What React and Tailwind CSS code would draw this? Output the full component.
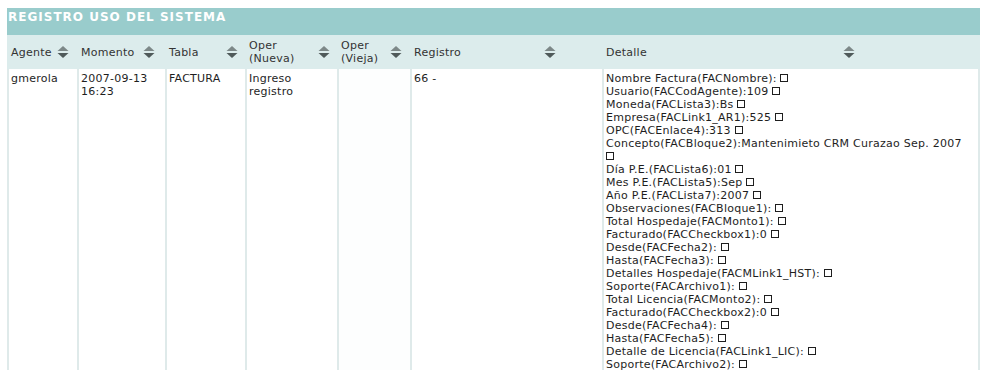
import React from 'react';

const font = { fontFamily: '"DejaVu Sans", Verdana, sans-serif' };

const columns = [
  { key: 'agente', label: ['Agente'], width: 'w-[68px]', textW: 'w-[46px]' },
  { key: 'momento', label: ['Momento'], width: 'w-[86px]', textW: 'w-[62px]' },
  { key: 'tabla', label: ['Tabla'], width: 'w-[78px]', textW: 'w-[57px]' },
  { key: 'nueva', label: ['Oper', '(Nueva)'], width: 'w-[90px]', textW: 'w-[69px]' },
  { key: 'vieja', label: ['Oper', '(Vieja)'], width: 'w-[71px]', textW: 'w-[49px]' },
  { key: 'registro', label: ['Registro'], width: 'w-[190px]', textW: 'w-[130px]' },
  { key: 'detalle', label: ['Detalle'], width: 'w-[374px]', textW: 'w-[237px]' },
];

const detalle = [
  ['Nombre Factura(FACNombre): ', true],
  ['Usuario(FACCodAgente):109 ', true],
  ['Moneda(FACLista3):Bs ', true],
  ['Empresa(FACLink1_AR1):525 ', true],
  ['OPC(FACEnlace4):313 ', true],
  ['Concepto(FACBloque2):Mantenimieto CRM Curazao Sep. 2007', false],
  ['', true],
  ['Día P.E.(FACLista6):01 ', true],
  ['Mes P.E.(FACLista5):Sep ', true],
  ['Año P.E.(FACLista7):2007 ', true],
  ['Observaciones(FACBloque1): ', true],
  ['Total Hospedaje(FACMonto1): ', true],
  ['Facturado(FACCheckbox1):0 ', true],
  ['Desde(FACFecha2): ', true],
  ['Hasta(FACFecha3): ', true],
  ['Detalles Hospedaje(FACMLink1_HST): ', true],
  ['Soporte(FACArchivo1): ', true],
  ['Total Licencia(FACMonto2): ', true],
  ['Facturado(FACCheckbox2):0 ', true],
  ['Desde(FACFecha4): ', true],
  ['Hasta(FACFecha5): ', true],
  ['Detalle de Licencia(FACLink1_LIC): ', true],
  ['Soporte(FACArchivo2): ', true],
];

const Box = () => <span className="inline-block h-[8px] w-[8px] border border-[#1e1e1e] align-baseline" />;

// little up/down sort arrows used in the header
const SortIcon = () => (
  <svg width="12" height="12" viewBox="0 0 12 12" className="shrink-0">
    <path d="M6 0 L11.5 5 L0.5 5 Z" fill="#7d8888" />
    <path d="M0.5 7 L11.5 7 L6 12 Z" fill="#4f5a5a" />
  </svg>
);

const App = () => {
  return (
    <div className="min-h-[370px] bg-white pt-[8px] pl-[7px] text-[11px] leading-[13px] tracking-[0.25px] text-[#1e1e1e]" style={font}>
      <div className="w-[973px]">
        {/* Title bar */}
        <div className="h-[27px] bg-[#99cccc] pl-[1px] pt-[2px] text-[12px] font-bold leading-[14px] tracking-[1px] text-white">
          REGISTRO USO DEL SISTEMA
        </div>

        {/* Header row */}
        <div className="flex h-[34px] gap-[2px] bg-[#dcecec] px-[2px] text-[#333]">
          {columns.map((col) => (
            <div key={col.key} className={`${col.width} flex items-center pl-[2px]`}>
              <div className={`${col.textW} shrink-0`}>
                {col.label.map((l) => (
                  <div key={l}>{l}</div>
                ))}
              </div>
              <SortIcon />
            </div>
          ))}
        </div>

        {/* Body row */}
        <div className="flex gap-[2px] bg-[#dfeaea] px-[2px]">
          <div className="w-[68px] bg-white pl-[2px] pt-[3px]">gmerola</div>
          <div className="w-[86px] bg-white pl-[2px] pt-[3px]">
            2007-09-13
            <br />
            16:23
          </div>
          <div className="w-[78px] bg-white pl-[2px] pt-[3px]">FACTURA</div>
          <div className="w-[90px] bg-white pl-[2px] pt-[3px]">
            Ingreso
            <br />
            registro
          </div>
          <div className="w-[71px] bg-[#fdfefe] pl-[2px] pt-[3px]"></div>
          <div className="w-[190px] bg-white pl-[2px] pt-[3px]">66 -</div>
          <div className="w-[374px] bg-white pl-[2px] pt-[3px]">
            {detalle.map(([text, box], i) => (
              <div key={i} className="whitespace-pre">
                {text}
                {box && <Box />}
              </div>
            ))}
          </div>
        </div>
      </div>
    </div>
  );
};

export default App;
